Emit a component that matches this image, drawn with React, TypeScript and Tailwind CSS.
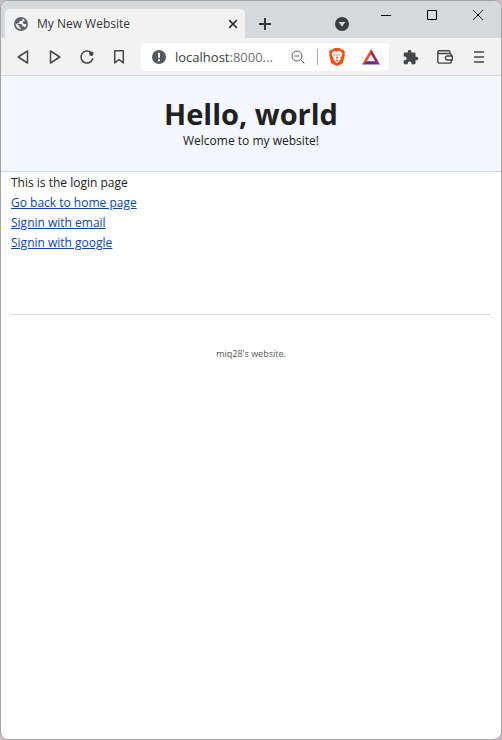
import React from "react";

function NavButton({ label, children }: { label: string; children: React.ReactNode }) {
  return (
    <button type="button" aria-label={label} className="flex h-7 w-8 shrink-0 items-center justify-center text-[#444648]">
      {children}
    </button>
  );
}

function ToolButton({ label, children }: { label: string; children: React.ReactNode }) {
  return (
    <button type="button" aria-label={label} className="flex h-7 w-[34px] shrink-0 items-center justify-center text-[#444648]">
      {children}
    </button>
  );
}

function CaptionButton({ label, children }: { label: string; children: React.ReactNode }) {
  return (
    <button type="button" aria-label={label} className="flex h-7 w-[46px] shrink-0 items-center justify-center text-black">
      {children}
    </button>
  );
}

function TitleBar() {
  return (
    <div className="flex h-[37px] items-start bg-[#d5d9dc] pl-1">
      <div className="mt-2 flex h-[29px] max-w-[240px] flex-1 items-center rounded-t-[5px] bg-[#f2f2f2] pl-2 pr-1">
        <svg width="16" height="16" viewBox="0 0 16 16" className="shrink-0" aria-hidden="true">
          <circle cx="8" cy="8" r="7" fill="#5f6368" />
          <path d="M9.500 2.500v1.200c0 .8-.6 1.300-1.500 1.300H6.500v1.300c0 .5-.4.9-1 .9H4.200v.9h3.600c.9 0 1.500.6 1.500 1.500v.9h1c.9 0 1.400.5 1.400 1.300.9-.9 1.600-2.200 1.600-3.800h-2.100c-.9 0-1.500-.5-1.500-1.400V5.500h.8c.6 0 1-.4 1.200-1.200-.6-.9-1.200-1.400-2.200-1.800zM2.600 7.600c0 3 2.200 5.600 5.200 5.800v-1.600c-1 0-1.500-.5-1.500-1.400V9.700z" fill="#f2f2f2" />
        </svg>
        <span className="ml-2 flex-1 truncate text-[12px] leading-4 text-[#35373c]">My New Website</span>
        <button type="button" aria-label="Close tab" className="flex size-4 items-center justify-center">
          <svg width="10" height="10" viewBox="0 0 10 10" fill="none" stroke="#333537" strokeWidth="1.7" aria-hidden="true">
            <path d="M1.2 1.2l7.6 7.6M8.8 1.2L1.2 8.8" />
          </svg>
        </button>
      </div>
      <button type="button" aria-label="New tab" className="ml-2 mt-[9px] flex h-7 w-6 shrink-0 items-center justify-center">
        <svg width="12" height="12" viewBox="0 0 12 12" fill="none" stroke="#333537" strokeWidth="2" aria-hidden="true">
          <path d="M6 0v12M0 6h12" />
        </svg>
      </button>
      <div className="ml-auto flex">
        <button type="button" aria-label="Search tabs" className="mr-3 mt-[9px] flex h-7 w-[18px] shrink-0 items-center justify-center">
          <svg width="14" height="14" viewBox="0 0 14 14" aria-hidden="true">
            <circle cx="7" cy="7" r="7" fill="#3b3d40" />
            <path d="M3.7 5h6.6L7 9.7z" fill="#d5d9dc" />
          </svg>
        </button>
        <CaptionButton label="Minimize">
          <svg width="10" height="10" viewBox="0 0 10 10" aria-hidden="true"><path d="M0 5h10v1H0z" fill="currentColor" /></svg>
        </CaptionButton>
        <CaptionButton label="Maximize">
          <svg width="10" height="10" viewBox="0 0 10 10" fill="none" stroke="currentColor" aria-hidden="true"><path d="M.5.5h9v9h-9z" /></svg>
        </CaptionButton>
        <CaptionButton label="Close">
          <svg width="10" height="10" viewBox="0 0 10 10" fill="none" stroke="currentColor" aria-hidden="true"><path d="M0 0l10 10M10 0L0 10" /></svg>
        </CaptionButton>
      </div>
    </div>
  );
}

function BraveIcon() {
  return (
    <svg width="16" height="18" viewBox="0 0 16 18" aria-hidden="true">
      <path d="M5.2 0h5.6l1.4 1.6 1.8-.2 2 2.4-.6 1.6.5 1.4-1.8 7.1c-.3 1-.8 1.5-1.6 2.1L8 18l-4.500-2c-.8-.6-1.300-1.100-1.600-2.100L.1 6.800l.5-1.400L0 3.800l2-2.400 1.800.2z" fill="#fb5010" />
      <path d="M5 2.700l1.600.5h2.800l1.600-.5 1.500 1.800 1 1-.6 1.100.2 1-1.800 2.600.3 1.500-1.500 1.300L8 15.200 5.900 13l-1.500-1.300.3-1.500L2.900 7.600l.2-1-.6-1.100 1-1z" fill="#fff" />
      <path d="M4 6.200l2.500.6-.8.900zM12 6.200l-2.500.6.8.9zM7.600 6h.8l-.1 3.100 1 .9L8 10.800 6.700 10l1-.9zM6.400 12.300L8 11.600l1.600.7L8 13.500z" fill="#fb5010" />
    </svg>
  );
}

function RewardsIcon() {
  return (
    <svg width="18" height="16" viewBox="0 0 18 16" aria-hidden="true">
      <path d="M9 0v5.200L4.800 12.300 0 15.500z" fill="#ff4724" />
      <path d="M9 0l9 15.500-4.800-3.200L9 5.200z" fill="#9e1f63" />
      <path d="M0 15.500l4.800-3.200h8.400l4.800 3.200z" fill="#662d91" />
    </svg>
  );
}

function Toolbar() {
  return (
    <div className="flex h-[38px] items-start border-b border-[#d3d7dd] bg-[#f2f2f2] pl-1.5 pr-[5px] pt-[5px]">
      <NavButton label="Back">
        <svg width="14" height="16" viewBox="0 0 14 16" fill="none" stroke="currentColor" strokeWidth="1.500" strokeLinejoin="round" aria-hidden="true"><path d="M11.500 2v12L2.200 8z" /></svg>
      </NavButton>
      <NavButton label="Forward">
        <svg width="14" height="16" viewBox="0 0 14 16" fill="none" stroke="currentColor" strokeWidth="1.500" strokeLinejoin="round" aria-hidden="true"><path d="M2.500 2v12l9.300-6z" /></svg>
      </NavButton>
      <NavButton label="Reload">
        <svg width="16" height="16" viewBox="0 0 16 16" fill="none" stroke="currentColor" strokeWidth="1.500" strokeLinecap="round" aria-hidden="true">
          <path d="M13.700 9.800A6 6 0 1 1 11.800 3.400" />
          <circle cx="12.300" cy="4.800" r="2.200" fill="currentColor" stroke="none" />
        </svg>
      </NavButton>
      <NavButton label="Bookmark this page">
        <svg width="12" height="16" viewBox="0 0 12 16" fill="none" stroke="currentColor" strokeWidth="1.500" strokeLinejoin="round" aria-hidden="true"><path d="M1.700 1.700h8.600v12.200L6 10.500l-4.300 3.400z" /></svg>
      </NavButton>
      <div className="ml-1.5 mr-[5px] flex h-7 min-w-0 flex-1 items-center rounded-[4px] bg-white pl-[11px] pr-[9px]">
        <button type="button" aria-label="View site information" className="shrink-0">
          <svg width="14" height="14" viewBox="0 0 14 14" aria-hidden="true">
            <circle cx="7" cy="7" r="7" fill="#55585c" />
            <path d="M6 2.800h2v5H6zM6 9.200h2v2H6z" fill="#fff" />
          </svg>
        </button>
        <div className="ml-[9px] min-w-0 flex-1 truncate text-[13px] leading-5 text-[#707276]">
          <span className="text-[#3a3c40]">localhost</span>:8000...
        </div>
        <button type="button" aria-label="Zoom" className="mr-[11px] shrink-0">
          <svg width="16" height="16" viewBox="0 0 16 16" fill="none" stroke="#5c5e62" aria-hidden="true">
            <circle cx="7" cy="7" r="5" />
            <path d="M4.500 7h5M10.700 10.700l3.600 3.600" />
          </svg>
        </button>
        <div className="h-4 w-px shrink-0 bg-[#a6a8ab]" />
        <button type="button" aria-label="Brave Shields" className="ml-[11px] shrink-0"><BraveIcon /></button>
        <button type="button" aria-label="Brave Rewards" className="ml-[17px] shrink-0"><RewardsIcon /></button>
      </div>
      <ToolButton label="Extensions">
        <svg width="16" height="16" viewBox="1 0 23 23" fill="currentColor" aria-hidden="true"><path d="M20.500 11H19V7c0-1.100-.9-2-2-2h-4V3.500a2.500 2.500 0 0 0-5 0V5H4c-1.100 0-2 .9-2 2v3.800h1.500a2.700 2.700 0 0 1 0 5.400H2V20c0 1.100.9 2 2 2h3.800v-1.500a2.700 2.700 0 0 1 5.400 0V22H17c1.100 0 2-.9 2-2v-4h1.500a2.500 2.500 0 0 0 0-5z" /></svg>
      </ToolButton>
      <ToolButton label="Wallet">
        <svg width="16" height="14" viewBox="0 0 16 14" fill="none" stroke="currentColor" strokeWidth="1.400" strokeLinejoin="round" aria-hidden="true">
          <path d="M13 3.500V2.300c0-.9-.5-1.500-1.400-1.500H2.300C1.400.8.8 1.400.8 2.300v8.900c0 1.200.7 1.900 1.900 1.900h9.700c1.200 0 1.900-.7 1.900-1.900V5.300c0-1.100-.7-1.800-1.900-1.800H2.300C1.400 3.500.8 3 .8 2.200" />
          <path d="M15.300 6H10.500a2 2 0 0 0 0 4h4.800z" fill="#f2f2f2" />
        </svg>
      </ToolButton>
      <ToolButton label="Menu">
        <svg width="10" height="12" viewBox="0 0 10 12" aria-hidden="true"><path d="M0 0h10v2H0zM0 5h10v2H0zM0 10h10v2H0z" fill="#707173" /></svg>
      </ToolButton>
    </div>
  );
}

export default function App() {
  return (
    <div className="flex min-h-screen flex-col bg-[#c9bdc5] font-['Open_Sans','Noto_Sans',sans-serif]">
      <div className="flex flex-1 flex-col overflow-hidden rounded-[8px] border border-[#a3a3a5] bg-white">
        <TitleBar />
        <Toolbar />
        <header className="flex h-24 flex-col items-center border-b border-[#d5d9df] bg-[#f4f7ff] pt-[18px] text-[#212121]">
          <h1 className="text-[29px] font-bold leading-[39px]">Hello, world</h1>
          <p className="text-[12px] leading-4">Welcome to my website!</p>
        </header>
        <main className="px-2.5 pt-px text-[12px] leading-5 text-[#212121]">
          <p>This is the login page</p>
          <nav className="flex flex-col items-start text-[#0d47a1]">
            <a href="#home" className="underline">Go back to home page</a>
            <a href="#email" className="underline">Signin with email</a>
            <a href="#google" className="underline">Signin with google</a>
          </nav>
        </main>
        <footer className="mx-2.5 mt-[61px] border-t border-[#d5d9df] pt-[33px] text-center text-[9px] leading-3 text-[#585858]">
          miq28's website.
        </footer>
      </div>
    </div>
  );
}
